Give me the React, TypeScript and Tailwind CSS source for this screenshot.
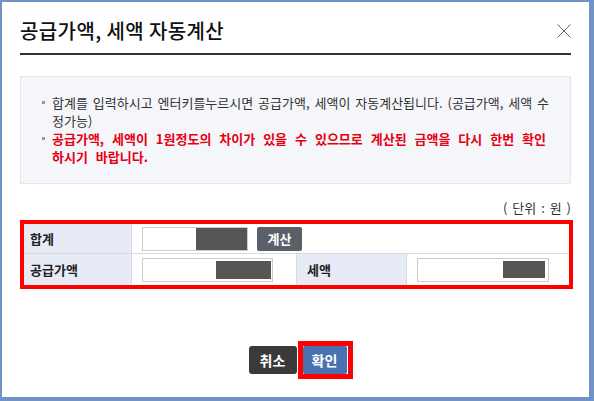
import React from "react";

const font = { fontFamily: '"Noto Sans CJK KR", "Noto Sans", sans-serif' };

function Redact({ w, h }: { w: number; h: number }) {
  return <div className="bg-[#555555]" style={{ width: w, height: h }} />;
}

export default function App() {
  return (
    <div
      className="w-[594px] h-[401px] bg-[#6f93c3] pt-[2px] pl-[2px] pr-[5px] pb-[4px]"
      style={font}
    >
      <div className="h-full bg-white px-[18px] flex flex-col">
        {/* header */}
        <div className="h-[53px] border-b-2 border-[#333333] flex items-center justify-between pt-[7px]">
          <div className="text-[20px] leading-[26px] text-[#111111] font-medium tracking-[0.4px]">
            공급가액, 세액 자동계산
          </div>
          <svg width="16" height="16" viewBox="0 0 16 16" className="mr-[-1px]">
            <path d="M1.5 1.5 L14.5 14.5 M14.5 1.5 L1.5 14.5" stroke="#666" strokeWidth="1" fill="none" />
          </svg>
        </div>

        {/* info box */}
        <div className="mt-[21px] h-[108px] border border-[#e3e6ec] bg-[#f5f6fa] pt-[17px] pl-[21px] text-[13px] leading-[18px]">
          <div className="flex">
            <div className="w-[10px] shrink-0 pt-[7px]">
              <div className="w-[3px] h-[3px] bg-[#9a9a9a]" />
            </div>
            <div className="text-[#333333] [word-spacing:2px] whitespace-nowrap">
              합계를 입력하시고 엔터키를누르시면 공급가액, 세액이 자동계산됩니다. (공급가액, 세액 수
              <br />
              정가능)
            </div>
          </div>
          <div className="flex">
            <div className="w-[10px] shrink-0 pt-[7px]">
              <div className="w-[3px] h-[3px] bg-[#9a9a9a]" />
            </div>
            <div className="text-[#e60012] font-bold text-[13px] [word-spacing:5px] whitespace-nowrap">
              공급가액, 세액이 1원정도의 차이가 있을 수 있으므로 계산된 금액을 다시 한번 확인
              <br />
              하시기 바랍니다.
            </div>
          </div>
        </div>

        {/* unit */}
        <div className="mt-[16px] h-[16px] text-right text-[13px] leading-[16px] text-[#333333] [word-spacing:2px]">
          ( 단위 : 원 )
        </div>

        {/* table */}
        <div className="mt-[4px] w-[553px] border-4 border-[#ff0000] text-[13px]">
          <div className="flex h-[30px] border-b border-[#d5dae3]">
            <div className="w-[108px] bg-[#e6ebf5] border-r border-[#d5dae3] flex items-center pl-[6px] font-bold text-[#222222]">
              합계
            </div>
            <div className="flex-1 flex items-center pl-[10px]">
              <div className="w-[106px] h-[24px] border border-[#cccccc] bg-white flex justify-end items-center">
                <Redact w={51} h={22} />
              </div>
              <button className="ml-[9px] w-[45px] h-[24px] rounded-[2px] bg-[#5b5f68] text-white font-bold text-[13px] leading-none">
                계산
              </button>
            </div>
          </div>
          <div className="flex h-[31px]">
            <div className="w-[108px] bg-[#e6ebf5] border-r border-[#d5dae3] flex items-center pl-[6px] font-bold text-[#222222]">
              공급가액
            </div>
            <div className="w-[165px] flex items-center pl-[10px] border-r border-[#d5dae3]">
              <div className="w-[131px] h-[24px] border border-[#cccccc] bg-white flex justify-end items-center pr-[1px]">
                <Redact w={55} h={18} />
              </div>
            </div>
            <div className="w-[110px] bg-[#e6ebf5] border-r border-[#d5dae3] flex items-center pl-[10px] font-bold text-[#222222]">
              세액
            </div>
            <div className="flex-1 flex items-center pl-[10px]">
              <div className="w-[132px] h-[24px] border border-[#cccccc] bg-white flex justify-end items-center pr-[3px]">
                <Redact w={42} h={17} />
              </div>
            </div>
          </div>
        </div>

        {/* buttons */}
        <div className="mt-[52px] flex justify-center items-center pl-[10px]">
          <button className="w-[48px] h-[28px] rounded-[3px] bg-[#3a3a3a] text-white font-bold text-[14px] leading-none">
            취소
          </button>
          <div className="ml-[1px] border-[5px] border-[#ff0000] bg-white pr-[1px]">
            <button className="w-[44px] h-[28px] rounded-[2px] bg-[#4a72b0] text-white font-bold text-[14px] leading-none block">
              확인
            </button>
          </div>
        </div>
      </div>
    </div>
  );
}
